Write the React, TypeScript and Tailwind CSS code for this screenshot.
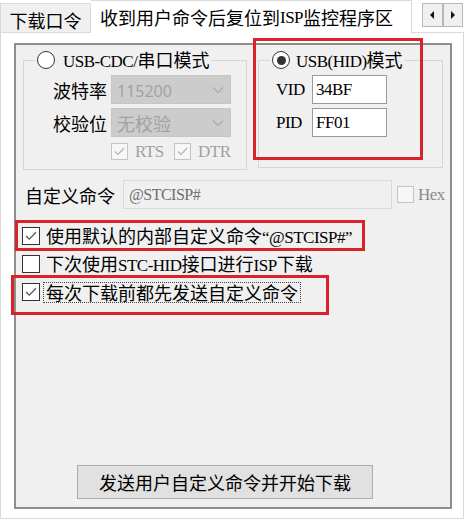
import type { ReactNode } from 'react'

const CJK = /[\u3000-\u9fff\uff00-\uffef]/
const LATIN = "font-['Liberation_Serif',serif] text-[17px] tracking-[-0.5px]"

// split text into CJK / latin runs so latin gets the narrow serif look
function Mixed({ text, latin = LATIN }: { text: string; latin?: string }) {
  const runs = text.match(/[\u3000-\u9fff\uff00-\uffef]+|[^\u3000-\u9fff\uff00-\uffef]+/g) ?? []
  return (
    <>
      {runs.map((r, i) =>
        CJK.test(r) ? (
          <span key={i}>{r}</span>
        ) : (
          <span key={i} className={latin}>
            {r}
          </span>
        )
      )}
    </>
  )
}

function Check({ color }: { color: string }) {
  return (
    <svg viewBox="0 0 18 18" className="h-full w-full">
      <polyline points="3.5,9 7.2,12.6 14.5,4.8" fill="none" stroke={color} strokeWidth="1.4" />
    </svg>
  )
}

function Box({ checked, disabled, size = 18 }: { checked?: boolean; disabled?: boolean; size?: number }) {
  const cls = disabled ? 'border-[#c4c4c4] bg-[#f7f7f7]' : 'border-[#333333] bg-white'
  return (
    <span
      className={`box-border block shrink-0 border ${cls} ${size === 17 ? 'h-[17px] w-[17px]' : 'h-[18px] w-[18px]'}`}
    >
      {checked && <Check color={disabled ? '#b4b4b4' : '#555555'} />}
    </span>
  )
}

function Radio({ on }: { on?: boolean }) {
  return (
    <span className="flex h-[18px] w-[18px] shrink-0 items-center justify-center rounded-full border border-[#333333] bg-white">
      {on && <span className="h-[9px] w-[9px] rounded-full bg-[#333333]" />}
    </span>
  )
}

function Select({ children }: { children: ReactNode }) {
  return (
    <div className="flex h-[29px] w-[120px] items-center justify-between border border-[#c6c6c6] bg-[#cccccc] pl-[5px] pr-[6px] text-[#a2a2a2]">
      <span>{children}</span>
      <svg viewBox="0 0 12 8" className="h-[8px] w-[12px]">
        <polyline points="1,1.5 6,6.5 11,1.5" fill="none" stroke="#a8a8a8" strokeWidth="1.1" />
      </svg>
    </div>
  )
}

function Field({ value }: { value: string }) {
  return (
    <div className="flex h-[29px] w-[75px] items-center border border-[#9a9a9a] bg-white pl-[3px]">
      <span className={LATIN}>{value}</span>
    </div>
  )
}

function Arrow({ dir }: { dir: 'l' | 'r' }) {
  return (
    <div className="flex h-full flex-1 items-center justify-center border border-[#b8b8b8] bg-[#f0f0f0]">
      <svg viewBox="0 0 4 8" className="h-[8px] w-[4px]">
        <polygon points={dir === 'l' ? '4,0 4,8 0,4' : '0,0 0,8 4,4'} fill="#111111" />
      </svg>
    </div>
  )
}

export default function App() {
  return (
    <div className="relative h-[522px] w-[465px] bg-white font-['Noto_Sans_CJK_SC',sans-serif] text-[18px] leading-none text-black">
      <div className="flex h-[32px]">
        <div className="mt-[3px] flex h-[29px] w-[91px] items-center justify-center border border-b-0 border-[#d9d9d9] bg-[#f0f0f0] pt-[4px]">
          下载口令
        </div>
        <div className="relative z-10 flex h-[33px] w-[321px] items-center border border-b-0 border-l-0 border-[#d9d9d9] bg-white pl-[9px]">
          <Mixed text="收到用户命令后复位到ISP监控程序区" />
        </div>
        <div className="ml-[10px] mt-[3px] flex h-[24px] w-[41px]">
          <Arrow dir="l" />
          <Arrow dir="r" />
        </div>
      </div>

      <div className="h-[487px] w-[464px] border border-[#d9d9d9] bg-white pl-[13px] pt-[10px]">
        <div className="flex h-[466px] w-[438px] flex-col border-2 border-[#8e8e8e] bg-[#f0f0f0]">
          <div className="ml-[7px] mt-[3px] flex items-start gap-[11px]">
            <fieldset className="w-[224px] border border-[#d6d6d6] pb-[9px]">
              <legend className="ml-[11px] px-[2px]">
                <div className="flex h-[24px] items-center gap-[8px]">
                  <Radio />
                  <span>
                    <Mixed text="USB-CDC/串口模式" />
                  </span>
                </div>
              </legend>
              <div className="mt-[3px] flex flex-col gap-[4px] pl-[29px]">
                <div className="flex items-center gap-[4px]">
                  <span className="w-[54px]">波特率</span>
                  <Select>
                    <span className="font-['Noto_Sans',sans-serif] text-[16px]">115200</span>
                  </Select>
                </div>
                <div className="flex items-center gap-[4px]">
                  <span className="w-[54px]">校验位</span>
                  <Select>无校验</Select>
                </div>
              </div>
              <div className="mt-[6px] flex h-[17px] items-center pl-[87px] text-[#a0a0a0]">
                <div className="flex w-[63px] items-center gap-[7px]">
                  <Box checked disabled size={17} />
                  <span className={LATIN}>RTS</span>
                </div>
                <div className="flex items-center gap-[7px]">
                  <Box checked disabled size={17} />
                  <span className={LATIN}>DTR</span>
                </div>
              </div>
            </fieldset>

            <fieldset className="w-[185px] border border-[#d6d6d6] pb-[30px]">
              <legend className="ml-[11px] px-[2px]">
                <div className="flex h-[24px] items-center gap-[6px]">
                  <Radio on />
                  <span>
                    <Mixed text="USB(HID)模式" />
                  </span>
                </div>
              </legend>
              <div className="mt-[3px] flex flex-col gap-[4px] pl-[17px]">
                <div className="flex items-center">
                  <span className={`w-[36px] ${LATIN}`}>VID</span>
                  <Field value="34BF" />
                </div>
                <div className="flex items-center">
                  <span className={`w-[36px] ${LATIN}`}>PID</span>
                  <Field value="FF01" />
                </div>
              </div>
            </fieldset>
          </div>

          <div className="mt-[10px] flex items-center pl-[9px]">
            <span className="w-[90px]">自定义命令</span>
            <div className="ml-[8px] flex h-[29px] w-[269px] items-center border border-[#d9d9d9] bg-[#f0f0f0] pl-[5px] text-[#6f6f6f]">
              <span className="font-['Liberation_Serif',serif] text-[16px] tracking-[-0.5px]">@STCISP#</span>
            </div>
            <span className="ml-[5px]">
              <Box disabled size={17} />
            </span>
            <span className={`ml-[4px] text-[#8a8a8a] ${LATIN}`}>Hex</span>
          </div>

          <div className="mt-[13px] flex flex-col pl-[6px]">
            <div className="flex h-[28px] items-center gap-[6px]">
              <Box checked />
              <span>
                <Mixed text="使用默认的内部自定义命令“@STCISP#”" />
              </span>
            </div>
            <div className="flex h-[28px] items-center gap-[6px]">
              <Box />
              <span>
                <Mixed text="下次使用STC-HID接口进行ISP下载" />
              </span>
            </div>
            <div className="flex h-[28px] items-center gap-[3px]">
              <Box checked />
              <span className="flex h-[21px] items-center border border-dotted border-[#444444] pl-[2px] pr-[2px]">
                每次下载前都先发送自定义命令
              </span>
            </div>
          </div>

          <div className="flex-1" />
          <button className="mb-[8px] ml-[61px] flex h-[34px] w-[296px] items-center justify-center border border-[#adadad] bg-[#e1e1e1]">
            发送用户自定义命令并开始下载
          </button>
        </div>
      </div>

      {/* red annotation frames drawn over the screenshot */}
      <div className="pointer-events-none absolute left-[253px] top-[38px] h-[122px] w-[170px] border-[3px] border-[#d8232a]" />
      <div className="pointer-events-none absolute left-[15px] top-[220px] h-[31px] w-[350px] border-[3px] border-[#d8232a]" />
      <div className="pointer-events-none absolute left-[11px] top-[275px] h-[40px] w-[318px] border-[3px] border-[#d8232a]" />
    </div>
  )
}
